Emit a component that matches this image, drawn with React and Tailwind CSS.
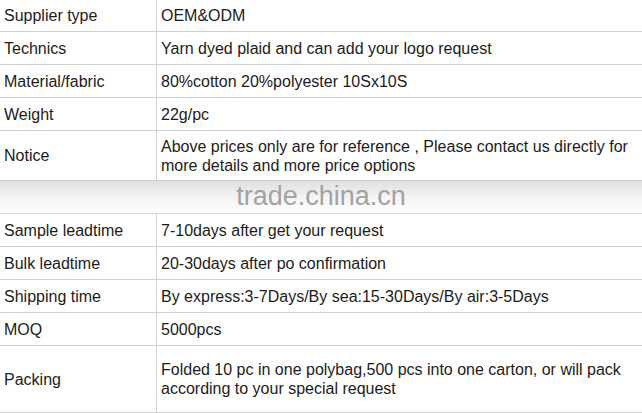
const topRows = [
  { label: 'Supplier type', value: 'OEM&ODM', h: 'h-[32px]' },
  { label: 'Technics', value: 'Yarn dyed plaid and can add your logo request', h: 'h-[33px]' },
  { label: 'Material/fabric', value: '80%cotton 20%polyester 10Sx10S', h: 'h-[33px]' },
  { label: 'Weight', value: '22g/pc', h: 'h-[33px]' },
  {
    label: 'Notice',
    value: 'Above prices only are for reference , Please contact us directly for more details and more price options',
    h: 'h-[50px]',
  },
]

const bottomRows = [
  { label: 'Sample leadtime', value: '7-10days after get your request', h: 'h-[33px]' },
  { label: 'Bulk leadtime', value: '20-30days after po confirmation', h: 'h-[33px]' },
  { label: 'Shipping time', value: 'By express:3-7Days/By sea:15-30Days/By air:3-5Days', h: 'h-[33px]' },
  { label: 'MOQ', value: '5000pcs', h: 'h-[33px]' },
  {
    label: 'Packing',
    value: 'Folded 10 pc in one polybag,500 pcs into one carton, or will pack according to your special request',
    h: 'h-[67px]',
  },
]

function Row({ label, value, h }) {
  return (
    <div className={`flex ${h} border-b border-[#d0d0d0]`}>
      <div className="w-[157px] shrink-0 flex items-center pl-[4px] border-r border-[#d0d0d0]">
        {label}
      </div>
      <div className="flex-1 flex items-center pl-[4px] pr-[2px]">
        <span>{value}</span>
      </div>
    </div>
  )
}

export default function App() {
  return (
    <div
      className="w-[642px] h-[413px] overflow-hidden bg-white text-[16px] leading-[19px] text-[#1c1c1c]"
      style={{ fontFamily: '"Liberation Sans", Arial, sans-serif' }}
    >
      {topRows.map((r) => (
        <Row key={r.label} {...r} />
      ))}

      {/* watermark band */}
      <div className="h-[33px] border-b border-[#d6d6d6] bg-linear-to-b from-[#dfdfdf] via-[#f3f3f3] to-white">
        <div className="pt-[2px] text-center text-[27px] leading-[27px] text-[#a3a3a3]">
          trade.china.cn
        </div>
      </div>

      {bottomRows.map((r) => (
        <Row key={r.label} {...r} />
      ))}
    </div>
  )
}
